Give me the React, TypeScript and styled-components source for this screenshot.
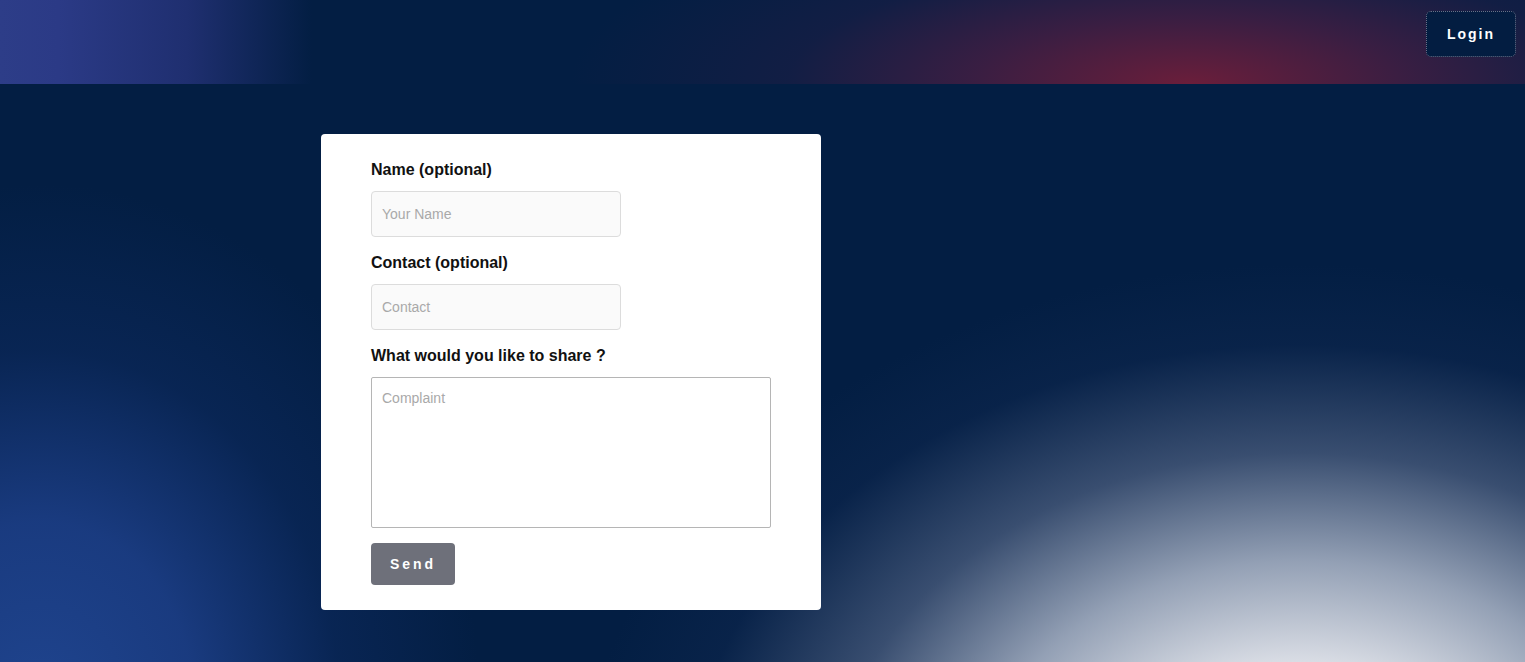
import styled, { createGlobalStyle } from "styled-components"

const GlobalStyle = createGlobalStyle`
	* {
		box-sizing: border-box;
	}

	body {
		margin: 0;
		font-family: "Liberation Sans", Arial, sans-serif;
		background: #031e43;
	}
`

const App = () => {
	return (
		<Page>
			<GlobalStyle />
			<Header>
				<LoginButton>Login</LoginButton>
			</Header>

			<Main>
				<Card>
					<Field>
						<Label>Name (optional)</Label>
						<Input placeholder="Your Name" />
					</Field>
					<Field>
						<Label>Contact (optional)</Label>
						<Input placeholder="Contact" />
					</Field>
					<Field>
						<Label>What would you like to share ?</Label>
						<TextArea placeholder="Complaint" />
					</Field>
					<SendButton>Send</SendButton>
				</Card>
			</Main>
		</Page>
	)
}

export default App

const Page = styled.div`
	min-height: 100vh;
	display: flex;
	flex-direction: column;
	background-color: #031e43;
`

const Header = styled.header`
	height: 84px;
	display: flex;
	justify-content: flex-end;
	align-items: flex-start;
	padding: 11px 9px 0 0;

	background: radial-gradient(
			ellipse 620px 190px at 1190px 100%,
			rgba(112, 30, 58, 0.95) 0%,
			rgba(80, 30, 66, 0.7) 35%,
			rgba(40, 30, 70, 0.4) 65%,
			rgba(3, 30, 67, 0) 100%
		),
		linear-gradient(
			90deg,
			#2d3d88 0%,
			#2b3a86 15%,
			#1f2f70 48%,
			#031e43 80%,
			#031e43 100%
		);
	background-size: 100% 100%, 390px 100%;
	background-repeat: no-repeat;
	background-color: #031e43;
`

const LoginButton = styled.button`
	width: 90px;
	height: 46px;
	cursor: pointer;
	background: #031d41;
	border: 1px dotted #6b6f86;
	border-radius: 5px;

	font-family: "Liberation Sans", Arial, sans-serif;
	font-weight: 700;
	font-size: 14px;
	letter-spacing: 2px;
	color: #ffffff;
`

const Main = styled.main`
	flex: 1;
	padding: 50px 0 52px 321px;

	background: radial-gradient(
			ellipse 720px 540px at 1300px 720px,
			rgba(238, 239, 243, 1) 0%,
			rgba(222, 225, 232, 1) 25%,
			rgba(155, 167, 187, 0.95) 45%,
			rgba(75, 94, 127, 0.75) 65%,
			rgba(22, 46, 88, 0.3) 85%,
			rgba(3, 30, 67, 0) 100%
		),
		radial-gradient(
			ellipse 440px 520px at 40px 620px,
			rgba(31, 68, 142, 1) 0%,
			rgba(28, 62, 134, 0.9) 35%,
			rgba(14, 44, 100, 0.5) 68%,
			rgba(3, 30, 67, 0) 100%
		),
		#031e43;
`

const Card = styled.form`
	width: 500px;
	display: flex;
	flex-direction: column;
	align-items: flex-start;
	padding: 27px 50px 25px;

	background: #ffffff;
	border-radius: 4px;
`

const Field = styled.div`
	display: flex;
	flex-direction: column;
	gap: 12px;
	margin-bottom: 17px;

	&:last-of-type {
		margin-bottom: 15px;
	}
`

const Label = styled.label`
	font-size: 16px;
	line-height: 18px;
	font-weight: 700;
	color: #111111;
`

const Input = styled.input`
	width: 250px;
	height: 46px;
	padding: 0 10px;

	background: #fafafa;
	border: 1px solid #dcdcdc;
	border-radius: 4px;

	font-family: "Liberation Sans", Arial, sans-serif;
	font-size: 14px;
	color: #333333;
	outline: none;

	&::placeholder {
		color: #a9a9a9;
	}
`

const TextArea = styled.textarea`
	width: 400px;
	height: 151px;
	padding: 12px 10px;
	resize: none;

	background: #ffffff;
	border: 1px solid #b5b5b5;
	border-radius: 2px;

	font-family: "Liberation Sans", Arial, sans-serif;
	font-size: 14px;
	color: #333333;
	outline: none;

	&::placeholder {
		color: #a9a9a9;
	}
`

const SendButton = styled.button`
	width: 84px;
	height: 42px;
	cursor: pointer;

	background: #6e707a;
	border: none;
	border-radius: 4px;

	font-family: "Liberation Sans", Arial, sans-serif;
	font-weight: 700;
	font-size: 14px;
	letter-spacing: 3px;
	color: #ffffff;
`
